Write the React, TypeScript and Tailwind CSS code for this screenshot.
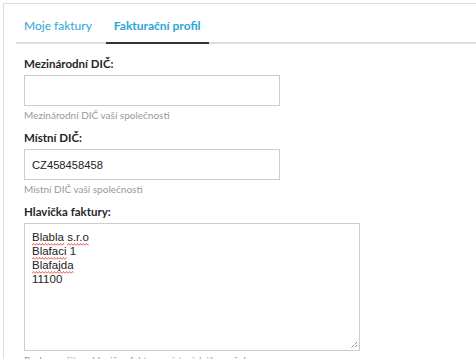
import React from "react";

const fields = [
    { label: "Mezinárodní DIČ:", value: "", help: "Mezinárodní DIČ vaší společnosti" },
    { label: "Místní DIČ:", value: "CZ458458458", help: "Místní DIČ vaší společnosti" },
];

// red squiggle like the browser spellchecker draws
const Misspelled: React.FC<{ children: React.ReactNode }> = ({ children }) => (
    <span className="relative inline-block">
        {children}
        <svg className="absolute left-0 -bottom-[2px] w-full h-[3px]" preserveAspectRatio="none">
            <rect width="100%" height="3" fill="url(#squiggle)" />
        </svg>
    </span>
);

const App: React.FC = () => {
    return (
        <div className="pl-[3px] pt-[3px] font-['Lato','Open_Sans',sans-serif] bg-white h-[359px] overflow-hidden">
            <svg width="0" height="0" className="absolute">
                <defs>
                    <pattern id="squiggle" width="3" height="3" patternUnits="userSpaceOnUse">
                        <path d="M0 2.5 L1.5 0.5 L3 2.5" stroke="#e53935" strokeWidth="0.8" fill="none" />
                    </pattern>
                </defs>
            </svg>
            <div className="border-l border-t border-[#dddddd] h-full pt-[13px]">
                <div className="ml-[12px] flex gap-[6px] border-b-2 border-[#dddddd] text-[12px] text-[#2ba6d6]">
                    <button className="px-2 pb-[7px] leading-[18px]">Moje faktury</button>
                    <button className="px-2 pb-[7px] leading-[18px] font-bold border-b-2 border-[#333333] -mb-[2px]">
                        Fakturační profil
                    </button>
                </div>

                <div className="px-[20px] pt-[12px]">
                    {fields.map((f, i) => (
                        <div key={i} className="mb-[8px]">
                            <label className="block text-[11.5px] font-bold text-[#262626] leading-[16px] mb-[3px]">{f.label}</label>
                            <input
                                defaultValue={f.value}
                                className="block w-[256px] h-[31px] border border-[#cccccc] px-[7px] text-[11.2px] text-[#222222] font-['Liberation_Sans',sans-serif] outline-none"
                            />
                            <p className="mt-[2px] text-[10px] leading-[14px] text-[#999999]">{f.help}</p>
                        </div>
                    ))}

                    <label className="block text-[11.5px] font-bold text-[#262626] leading-[16px] mb-[3px]">Hlavička faktury:</label>
                    <div className="relative w-[336px] h-[128px] border border-[#cccccc] px-[7px] pt-[6px] text-[11.5px] leading-[14px] text-[#222222] font-['Liberation_Sans',sans-serif]">
                        <div><Misspelled>Blabla</Misspelled> <Misspelled>s.r.o</Misspelled></div>
                        <div><Misspelled>Blafaci</Misspelled> 1</div>
                        <div><Misspelled>Blafajda</Misspelled></div>
                        <div>11100</div>
                        <svg className="absolute right-[1px] bottom-[1px]" width="9" height="9" viewBox="0 0 9 9">
                            <path d="M8 2 L2 8 M8 5 L5 8" stroke="#555555" strokeWidth="1" strokeDasharray="1 1" />
                        </svg>
                    </div>
                    <p className="mt-[2px] text-[10px] leading-[14px] text-[#999999]">Bude použito v hlavičce faktury místo údajů z vašeho</p>
                </div>
            </div>
        </div>
    );
};

export default App;
